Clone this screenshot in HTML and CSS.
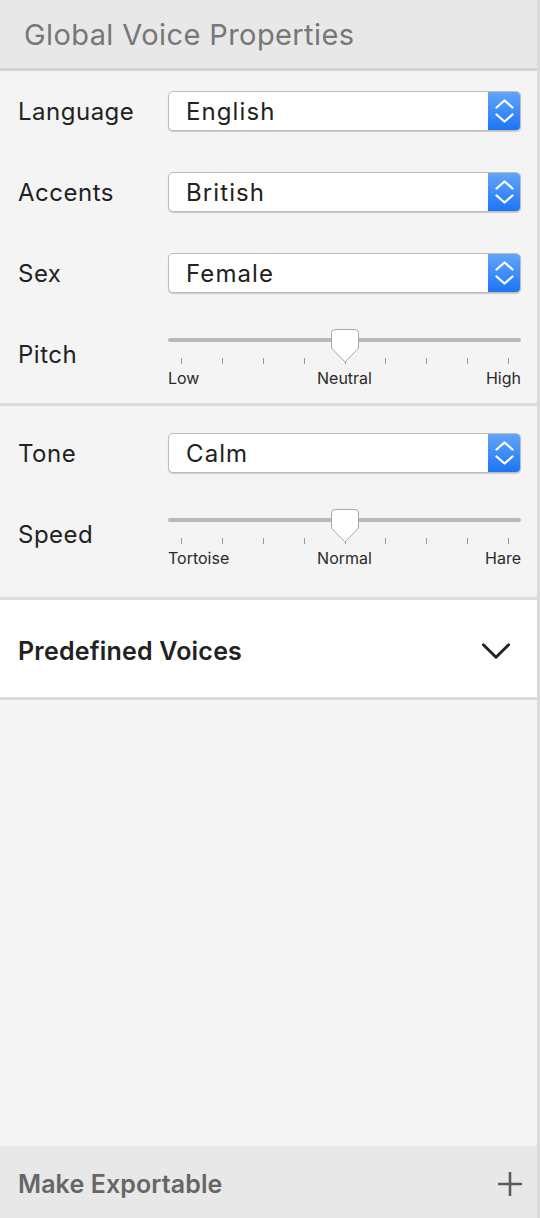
FILE: index.html
```html
<!DOCTYPE html>
<html lang="en">
<head>
<meta charset="utf-8">
<title>Global Voice Properties</title>
<link rel="stylesheet" href="styles.css">
</head>
<body>
<div class="panel">
  <header class="head">
    <h1 class="head-title">Global Voice Properties</h1>
  </header>

  <section class="group group-one">
    <div class="row">
      <span class="label">Language</span>
      <div class="select"><span class="select-text">English</span><span class="stepper"><svg width="33" height="40" viewBox="0 0 33 40"><path d="M8.5 16.5 L16.5 9.5 L24.5 16.5" /><path d="M8.5 23.5 L16.5 30.5 L24.5 23.5" /></svg></span></div>
    </div>
    <div class="row">
      <span class="label">Accents</span>
      <div class="select"><span class="select-text">British</span><span class="stepper"><svg width="33" height="40" viewBox="0 0 33 40"><path d="M8.5 16.5 L16.5 9.5 L24.5 16.5" /><path d="M8.5 23.5 L16.5 30.5 L24.5 23.5" /></svg></span></div>
    </div>
    <div class="row">
      <span class="label">Sex</span>
      <div class="select"><span class="select-text">Female</span><span class="stepper"><svg width="33" height="40" viewBox="0 0 33 40"><path d="M8.5 16.5 L16.5 9.5 L24.5 16.5" /><path d="M8.5 23.5 L16.5 30.5 L24.5 23.5" /></svg></span></div>
    </div>
    <div class="row row-slider">
      <span class="label label-slider">Pitch</span>
      <div class="slider">
        <div class="track"></div>
        <svg class="thumb" width="30" height="36" viewBox="0 0 30 36"><path d="M5 1.5 H25 Q28.5 1.5 28.5 5 V20 L15 34 L1.5 20 V5 Q1.5 1.5 5 1.5 Z" /></svg>
        <div class="ticks"><i></i><i></i><i></i><i></i><i></i><i></i><i></i><i></i><i></i></div>
        <div class="marks"><span class="mark-l">Low</span><span class="mark-c">Neutral</span><span class="mark-r">High</span></div>
      </div>
    </div>
  </section>

  <section class="group group-two">
    <div class="row">
      <span class="label">Tone</span>
      <div class="select"><span class="select-text">Calm</span><span class="stepper"><svg width="33" height="40" viewBox="0 0 33 40"><path d="M8.5 16.5 L16.5 9.5 L24.5 16.5" /><path d="M8.5 23.5 L16.5 30.5 L24.5 23.5" /></svg></span></div>
    </div>
    <div class="row row-slider">
      <span class="label label-slider">Speed</span>
      <div class="slider">
        <div class="track"></div>
        <svg class="thumb" width="30" height="36" viewBox="0 0 30 36"><path d="M5 1.5 H25 Q28.5 1.5 28.5 5 V20 L15 34 L1.5 20 V5 Q1.5 1.5 5 1.5 Z" /></svg>
        <div class="ticks"><i></i><i></i><i></i><i></i><i></i><i></i><i></i><i></i><i></i></div>
        <div class="marks"><span class="mark-l">Tortoise</span><span class="mark-c">Normal</span><span class="mark-r">Hare</span></div>
      </div>
    </div>
  </section>

  <section class="predefined">
    <span class="predefined-title">Predefined Voices</span>
    <svg class="chevron" width="32" height="20" viewBox="0 0 32 20"><path d="M2 3 L16 17 L30 3" /></svg>
  </section>

  <div class="filler"></div>

  <footer class="foot">
    <span class="foot-title">Make Exportable</span>
    <svg class="plus" width="26" height="26" viewBox="0 0 26 26"><path d="M13 1 V25 M1 13 H25" /></svg>
  </footer>
</div>
</body>
</html>
```

FILE: styles.css
```css
* {
  box-sizing: border-box;
}

html, body {
  margin: 0;
  padding: 0;
}

body {
  font-family: "Inter", "Roboto", "Liberation Sans", sans-serif;
  color: #222222;
  background: #f4f4f4;
}

.panel {
  width: 540px;
  height: 1218px;
  display: flex;
  flex-direction: column;
  background: #f4f4f4;
  border-right: 3px solid #dadada;
}

.head {
  height: 71px;
  flex: none;
  background: #e8e8e8;
  border-bottom: 3px solid #d3d3d3;
  display: flex;
  align-items: center;
  padding-left: 24px;
  padding-top: 1px;
}

.head-title {
  margin: 0;
  font-size: 29px;
  font-weight: 400;
  color: #777777;
  letter-spacing: 0.4px;
}

.group {
  flex: none;
  border-bottom: 3px solid #dcdcdc;
  padding-left: 18px;
  padding-right: 16px;
}

.group-one {
  padding-top: 20px;
  padding-bottom: 15px;
  height: 335px;
}

.group-two {
  padding-top: 27px;
  height: 194px;
}

.row {
  display: flex;
  align-items: center;
  height: 40px;
  margin-bottom: 41px;
}

.row-slider {
  align-items: flex-start;
  height: 59px;
  margin-bottom: 0;
}

.group-one .row:nth-child(3) {
  margin-bottom: 36px;
}

.group-two .row:first-child {
  margin-bottom: 36px;
}

.label {
  width: 150px;
  flex: none;
  font-size: 24px;
  line-height: 28px;
  letter-spacing: 0.5px;
  color: #222222;
  padding-top: 1px;
}

.label-slider {
  margin-top: 11px;
}

.select {
  flex: 1;
  height: 40px;
  display: flex;
  align-items: stretch;
  background: #ffffff;
  border: 1px solid #bdbdbd;
  border-radius: 5px;
  box-shadow: 0 1px 1px rgba(0, 0, 0, 0.18);
  overflow: hidden;
}

.select-text {
  flex: 1;
  padding-left: 17px;
  padding-top: 1px;
  font-size: 24px;
  line-height: 38px;
  color: #222222;
  letter-spacing: 1.1px;
}

.stepper {
  width: 33px;
  flex: none;
  margin: -1px -1px -1px 0;
  background: linear-gradient(#63a6fa, #1b74f5);
  border-radius: 0 5px 5px 0;
  display: flex;
}

.stepper path {
  fill: none;
  stroke: #ffffff;
  stroke-width: 2.3;
  stroke-linecap: round;
  stroke-linejoin: round;
}

.slider {
  position: relative;
  flex: 1;
  height: 59px;
}

.track {
  margin-top: 9px;
  height: 4px;
  border-radius: 2px;
  background: #b9b9b9;
}

.thumb {
  position: absolute;
  left: 162px;
  top: -1px;
}

.thumb path {
  fill: #ffffff;
  stroke: #a9a9a9;
  stroke-width: 1;
  stroke-linejoin: round;
}

.ticks {
  margin-top: 16px;
  height: 6px;
  display: flex;
  justify-content: space-between;
  padding: 0 12px 0 13px;
}

.ticks i {
  display: block;
  width: 1px;
  height: 6px;
  background: #9a9a9a;
}

.marks {
  margin-top: 4px;
  display: grid;
  grid-template-columns: 1fr auto 1fr;
  font-size: 16px;
  line-height: 20px;
  color: #2a2a2a;
}

.mark-l {
  justify-self: start;
}

.mark-c {
  justify-self: center;
}

.mark-r {
  justify-self: end;
}

.predefined {
  flex: none;
  height: 100px;
  background: #ffffff;
  border-bottom: 3px solid #dcdcdc;
  display: flex;
  align-items: center;
  justify-content: space-between;
  padding: 4px 26px 0 18px;
}

.predefined-title {
  font-size: 25px;
  font-weight: 600;
  letter-spacing: 0.2px;
  color: #222222;
}

.chevron {
  width: 30px;
  height: 18px;
}

.chevron path {
  fill: none;
  stroke: #222222;
  stroke-width: 3.2;
  stroke-linecap: round;
  stroke-linejoin: round;
}

.filler {
  flex: 1;
}

.foot {
  flex: none;
  height: 72px;
  background: #e8e8e8;
  display: flex;
  align-items: center;
  justify-content: space-between;
  padding: 3px 14px 0 18px;
}

.foot-title {
  font-size: 25px;
  font-weight: 600;
  letter-spacing: 0.1px;
  color: #666666;
}

.plus path {
  fill: none;
  stroke: #5a5a5a;
  stroke-width: 2.6;
}
```
